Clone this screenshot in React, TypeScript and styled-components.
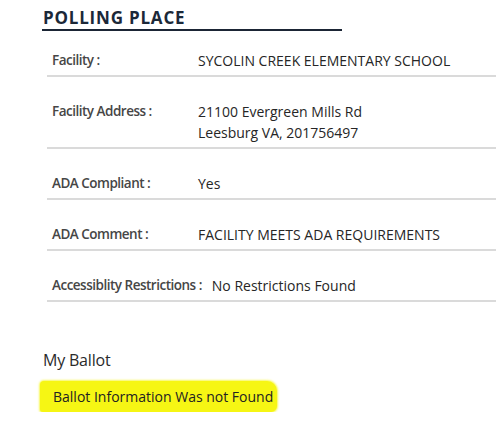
import styled, { createGlobalStyle } from 'styled-components';

const GlobalStyle = createGlobalStyle`
  body {
    margin: 0;
    background: #ffffff;
    font-family: 'Open Sans', 'Noto Sans', sans-serif;
  }
`;

type Detail = {
  label: string;
  lines: string[];
};

const details: Detail[] = [
  { label: 'Facility :', lines: ['SYCOLIN CREEK ELEMENTARY SCHOOL'] },
  {
    label: 'Facility Address :',
    lines: ['21100 Evergreen Mills Rd', 'Leesburg VA, 201756497'],
  },
  { label: 'ADA Compliant :', lines: ['Yes'] },
  { label: 'ADA Comment :', lines: ['FACILITY MEETS ADA REQUIREMENTS'] },
  { label: 'Accessiblity Restrictions :', lines: ['No Restrictions Found'] },
];

export default function App() {
  return (
    <>
      <GlobalStyle />
      <Page>
        <SectionTitle>POLLING PLACE</SectionTitle>
        <DetailList>
          {details.map((item) => (
            <DetailRow key={item.label}>
              <Label>{item.label}</Label>
              <Value>
                {item.lines.map((line) => (
                  <span key={line}>{line}</span>
                ))}
              </Value>
            </DetailRow>
          ))}
        </DetailList>

        <BallotTitle>My Ballot</BallotTitle>
        <Highlight>Ballot Information Was not Found</Highlight>
      </Page>
    </>
  );
}

const Page = styled.main`
  display: flex;
  flex-direction: column;
  align-items: flex-start;
  padding: 6px 0 0 42px;
  overflow: hidden;
`;

const SectionTitle = styled.h2`
  margin: 0;
  width: 300px;
  box-sizing: border-box;
  padding-left: 1px;
  font-size: 17px;
  line-height: 23px;
  font-weight: 700;
  letter-spacing: 0.8px;
  color: #1b2838;
  border-bottom: 2px solid #1b2535;
`;

const DetailList = styled.div`
  align-self: stretch;
  margin-left: 5px;
  display: flex;
  flex-direction: column;
`;

const DetailRow = styled.div`
  display: flex;
  align-items: flex-start;
  gap: 10px;
  padding: 24px 0 4px 5px;
  border-bottom: 2px solid #dadada;

  &:first-child {
    padding-top: 19px;
  }
`;

const Label = styled.div`
  flex: 0 0 auto;
  min-width: 136px;
  font-size: 13.5px;
  line-height: 21px;
  font-weight: 600;
  letter-spacing: -0.5px;
  color: #464646;
`;

const Value = styled.div`
  display: flex;
  flex-direction: column;
  font-size: 14px;
  line-height: 21px;
  color: #262626;
`;

const BallotTitle = styled.h3`
  margin: 47px 0 0 1px;
  font-size: 16px;
  line-height: 22px;
  font-weight: 400;
  letter-spacing: -0.2px;
  color: #2a2a2a;
`;

const Highlight = styled.p`
  margin: 10px 0 0 -2px;
  padding: 5px 4px 5px 13px;
  font-size: 14px;
  line-height: 21px;
  color: #222222;
  background: #f6f614;
  border-radius: 4px 10px 6px 3px;
  box-shadow: 0 0 2px 1px rgba(246, 246, 20, 0.7);
`;
